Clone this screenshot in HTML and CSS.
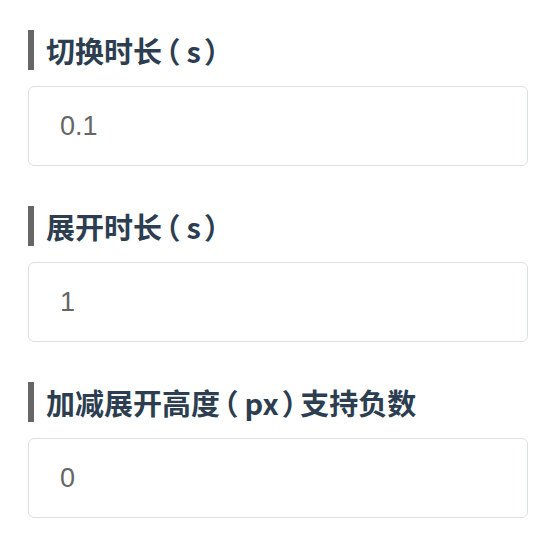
FILE: index.html
```html
<!DOCTYPE html>
<html lang="zh-CN">
<head>
<meta charset="utf-8">
<title>设置</title>
<link rel="stylesheet" href="styles.css">
</head>
<body>
  <div class="form">
    <section class="group">
      <h3 class="label">切换时长<span class="paren-l">（</span>s<span class="paren-r">）</span></h3>
      <div class="field">0.1</div>
    </section>
    <section class="group">
      <h3 class="label">展开时长<span class="paren-l">（</span>s<span class="paren-r">）</span></h3>
      <div class="field">1</div>
    </section>
    <section class="group">
      <h3 class="label">加减展开高度<span class="paren-l">（</span>px<span class="paren-r">）</span>支持负数</h3>
      <div class="field">0</div>
    </section>
  </div>
</body>
</html>
```
FILE: styles.css
```css
html, body {
  margin: 0;
  padding: 0;
  background: #ffffff;
}
.form {
  padding: 30px 30px 0 28px;
  display: flex;
  flex-direction: column;
  gap: 40px;
}
.group {
  display: flex;
  flex-direction: column;
  gap: 16px;
}
.label {
  margin: 0;
  height: 40px;
  line-height: 40px;
  border-left: 6px solid #666666;
  padding-left: 12px;
  font-family: "Noto Sans CJK SC", "Noto Sans", sans-serif;
  font-weight: 700;
  font-size: 29px;
  color: #2c3e50;
  white-space: nowrap;
}
.paren-l {
  font-feature-settings: "halt" 1;
  padding: 0 6px 0 4px;
}
.paren-r {
  font-feature-settings: "halt" 1;
  padding: 0 4px 0 3px;
}
.field {
  box-sizing: border-box;
  height: 80px;
  border: 1px solid #dcdfe6;
  border-radius: 6px;
  padding: 0 31px;
  display: flex;
  align-items: center;
  font-family: "Liberation Sans", Arial, sans-serif;
  font-size: 27px;
  color: #666666;
}
```
